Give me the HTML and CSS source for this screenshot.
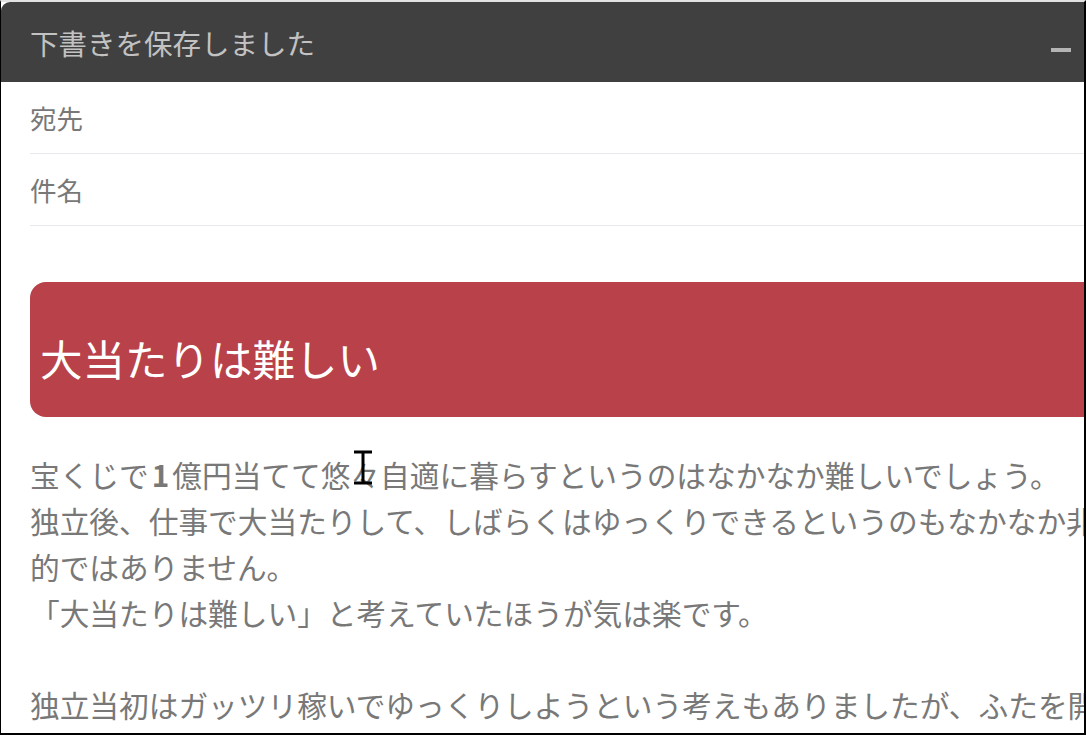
FILE: index.html
```html
<!DOCTYPE html>
<html>
<head>
    <title>下書き</title>
    <meta charset="utf-8">
    <link rel="stylesheet" href="styles.css">
</head>
<body>

    <div id="screen">
        <div class="compose">
            <div class="compose-head">
                <div class="compose-title">下書きを保存しました</div>
                <div class="head-icons">
                    <span class="icon-min"></span>
                    <span class="icon-box"></span>
                    <span class="icon-close">×</span>
                </div>
            </div>

            <div class="field">宛先</div>
            <div class="field">件名</div>

            <div class="banner">大当たりは難しい</div>

            <div class="mail-body">
                宝くじで<span class="num">1</span>億円当てて悠々自適に暮らすというのはなかなか難しいでしょう。<br>
                独立後、仕事で大当たりして、しばらくはゆっくりできるというのもなかなか非現実的ではありません。<br>
                「大当たりは難しい」と考えていたほうが気は楽です。<br>
                <br>
                独立当初はガッツリ稼いでゆっくりしようという考えもありましたが、ふたを開けてみると
            </div>
        </div>

        <svg class="ibeam" width="22" height="36" viewBox="0 0 22 36">
            <path d="M1 2 H19 M10 2 V33 M1 33 H19" stroke="#000" stroke-width="3" fill="none"/>
        </svg>
    </div>

</body>
</html>
```

FILE: styles.css
```css
* {
    margin: 0;
    padding: 0;
}

body {
    background: #fff;
    font-family: "Noto Sans CJK JP", "Noto Sans", sans-serif;
}

#screen {
    position: relative;
    width: 1086px;
    height: 735px;
    box-sizing: border-box;
    border-style: solid;
    border-width: 2px 2px 2px 1px;
    border-color: #e2e2e2 #000 #000 #000;
    overflow: hidden;
}

.compose {
    width: 1190px;
}

.compose-head {
    height: 80px;
    background: #404040;
    border-radius: 9px 9px 0 0;
    display: flex;
    align-items: center;
    justify-content: space-between;
    padding: 0 32px 0 29px;
}

.compose-title {
    font-size: 28.5px;
    color: #c2c2c2;
}

.head-icons {
    display: flex;
    align-items: center;
    gap: 20px;
    margin-right: -2px;
}

.icon-min {
    width: 20px;
    height: 4px;
    background: #b4b4b4;
    margin-top: 16px;
}

.icon-box {
    width: 16px;
    height: 16px;
    border: 2px solid #b4b4b4;
}

.icon-close {
    color: #b4b4b4;
    font-size: 30px;
}

.field {
    margin-left: 29px;
    height: 71px;
    border-bottom: 1px solid #e6e8eb;
    display: flex;
    align-items: center;
    font-size: 26.5px;
    color: #787878;
}

.banner {
    margin: 56px 0 0 29px;
    height: 135px;
    box-sizing: border-box;
    background: #b8414a;
    border-radius: 16px;
    display: flex;
    align-items: center;
    padding: 16px 0 0 10px;
    font-size: 42.5px;
    color: #fff;
}

.mail-body {
    margin: 35px 0 0 29px;
    width: 1135px;
    font-size: 29.7px;
    line-height: 46px;
    color: #787878;
}

.num {
    font-weight: 700;
    margin: 0 3px;
}

.ibeam {
    position: absolute;
    left: 352px;
    top: 448px;
}
```
